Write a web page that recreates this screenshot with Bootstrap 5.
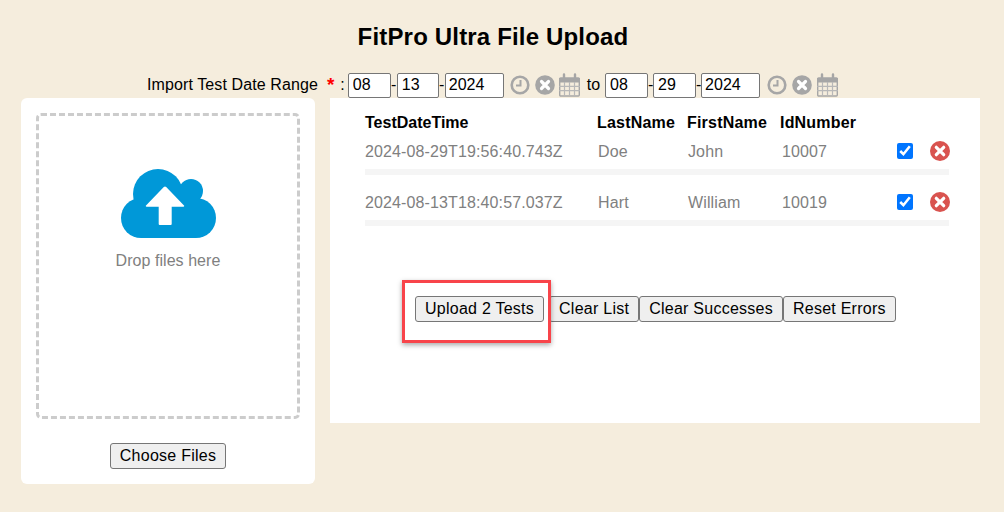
<!DOCTYPE html>
<html lang="en">
<head>
    <meta charset="UTF-8">
    <meta name="viewport" content="width=device-width, initial-scale=1.0">
    <title>FitPro Ultra File Upload</title>
    <link href="https://cdn.jsdelivr.net/npm/bootstrap@5.3.3/dist/css/bootstrap.min.css" rel="stylesheet">
    <style>
        html, body { height: 512px; overflow: hidden; }
        body { background: #f5eddd; font-family: "Liberation Sans", Arial, sans-serif; font-size: 16px; color: #000; }
        .page-title { font-size: 24px; font-weight: 700; line-height: 28px; letter-spacing: .17px; margin: 0 0 0 -18px; padding-top: 23px; text-align: center; }
        .range-row { height: 26px; margin-top: 21px; padding-left: 147px; line-height: 26px; white-space: nowrap; }
        .range-label { letter-spacing: .1px; }
        .req { color: #f00; font-weight: 700; font-size: 19px; margin: 0 6px 0 9px; line-height: 26px; }
        .dash { width: 6px; text-align: center; }
        .dash-sm { width: 5px; }
        .date-part { height: 25px; padding: 0 0 0 4px; border: 1px solid #767676; border-radius: 2px; background: #fff; font: 16px "Liberation Sans", Arial, sans-serif; color: #000; outline: none; }
        .w-mm { width: 43px; }
        .w-dd { width: 42px; }
        .w-dd2 { width: 43px; }
        .w-yy { width: 59px; padding-left: 3px; }
        .date-tool { display: block; flex: none; margin-left: 5px; }
        .tool-first { margin-left: 6px; }
        .tool-first2 { margin-left: 7px; }
        .tool-cal { margin-left: 3px; }
        .tool-cal2 { margin-left: 4px; }
        .to-word { margin: 0 5px 0 6px; }
        .panels { padding-left: 21px; align-items: flex-start; }
        .drop-panel { width: 294px; height: 386px; background: #fff; border-radius: 6px; padding: 15px 15px 0; }
        .drop-zone { height: 306px; border: 3px dashed #ccc; border-radius: 5px; padding-top: 53px; color: #808080; }
        .drop-zone span { line-height: 20px; margin-top: 12px; letter-spacing: .05px; }
        .choose-wrap { margin-top: 24px; }
        .plain-btn { height: 26px; padding: 0 9px; border: 1px solid #767676; border-radius: 3px; background: #efefef; color: #000; font: 16px "Liberation Sans", Arial, sans-serif; letter-spacing: .25px; line-height: 22px; white-space: nowrap; }
        .list-panel { width: 650px; height: 325px; margin-left: 15px; background: #fff; padding: 15px 31px 0 35px; position: relative; }
        .test-grid { display: grid; align-items: center; }
        .test-head { grid-template-columns: 232px 90px 93px 115px; font-weight: 700; height: 20px; line-height: 20px; letter-spacing: .2px; }
        .test-head span { white-space: nowrap; }
        .test-head span:first-child { letter-spacing: 0; }
        .test-row { grid-template-columns: 233px 90px 94px 115px 33px 21px; height: 36px; color: #808080; line-height: 20px; letter-spacing: .12px; }
        .test-row span { padding-top: 2px; }
        .row-next { margin-top: 9px; }
        .strip { height: 6px; background: #f5f5f5; }
        .pick { width: 16px; height: 16px; margin: 0; display: block; accent-color: #0075ff; }
        .action-row { margin-top: 70px; padding-left: 50px; }
        .action-row .plain-btn:first-child { margin-right: 5px; }
        .call-out { position: absolute; left: 72px; top: 182px; width: 149px; height: 63px; border: 3px solid #f8444a; box-shadow: 0 2px 5px rgba(0, 0, 0, .35); pointer-events: none; }
    </style>
</head>
<body>
    <h1 class="page-title">FitPro Ultra File Upload</h1>

    <!-- date range -->
    <div class="range-row d-flex align-items-center">
        <span class="range-label">Import Test Date Range</span><span class="req">*</span><span>:</span>
        <input class="date-part w-mm" style="margin-left:3px" value="08"><span class="dash">-</span><input class="date-part w-dd" value="13"><span class="dash">-</span><input class="date-part w-yy" value="2024">
        <svg class="date-tool tool-first" width="20" height="20" viewBox="0 0 20 20"><circle cx="10" cy="10" r="8.300" fill="none" stroke="#a6a6a6" stroke-width="2.600"/><path d="M10.500 5v5.500H6" fill="none" stroke="#a6a6a6" stroke-width="2"/></svg>
        <svg class="date-tool" width="20" height="20" viewBox="0 0 20 20"><circle cx="10" cy="10" r="9.800" fill="#a6a6a6"/><path d="M6.500 6.500l7 7M13.500 6.500l-7 7" stroke="#fff" stroke-width="3.200" stroke-linecap="round"/></svg>
        <svg class="date-tool tool-cal" width="23" height="24" viewBox="0 0 23 24"><rect x="1.700" y="5" width="19.600" height="18" rx="1" fill="#f5eddd" stroke="#a6a6a6" stroke-width="1.400"/><rect x="1" y="5" width="21" height="4.500" fill="#a6a6a6"/><path d="M6.500 9v13M11.500 9v13M16.500 9v13M1 13.300h21M1 17.700h21" stroke="#b8b8b8" stroke-width="1.200"/><path d="M6 1.500v5M17 1.500v5" stroke="#a6a6a6" stroke-width="2.400" stroke-linecap="round"/></svg>
        <span class="to-word">to</span>
        <input class="date-part w-mm" value="08"><span class="dash dash-sm">-</span><input class="date-part w-dd2" value="29"><span class="dash dash-sm">-</span><input class="date-part w-yy" value="2024">
        <svg class="date-tool tool-first2" width="20" height="20" viewBox="0 0 20 20"><circle cx="10" cy="10" r="8.300" fill="none" stroke="#a6a6a6" stroke-width="2.600"/><path d="M10.500 5v5.500H6" fill="none" stroke="#a6a6a6" stroke-width="2"/></svg>
        <svg class="date-tool" width="20" height="20" viewBox="0 0 20 20"><circle cx="10" cy="10" r="9.800" fill="#a6a6a6"/><path d="M6.500 6.500l7 7M13.500 6.500l-7 7" stroke="#fff" stroke-width="3.200" stroke-linecap="round"/></svg>
        <svg class="date-tool tool-cal2" width="23" height="24" viewBox="0 0 23 24"><rect x="1.700" y="5" width="19.600" height="18" rx="1" fill="#f5eddd" stroke="#a6a6a6" stroke-width="1.400"/><rect x="1" y="5" width="21" height="4.500" fill="#a6a6a6"/><path d="M6.500 9v13M11.500 9v13M16.500 9v13M1 13.300h21M1 17.700h21" stroke="#b8b8b8" stroke-width="1.200"/><path d="M6 1.500v5M17 1.500v5" stroke="#a6a6a6" stroke-width="2.400" stroke-linecap="round"/></svg>
    </div>

    <div class="panels d-flex">
        <!-- drop area -->
        <div class="drop-panel">
            <div class="drop-zone d-flex flex-column align-items-center">
                <svg width="95" height="70" viewBox="0 0 95 70">
                    <g fill="#0098d8"><circle cx="37" cy="25" r="25"/><circle cx="70" cy="22" r="12"/><circle cx="20" cy="49" r="20"/><circle cx="75" cy="49" r="20"/><rect x="20" y="28" width="55" height="41"/></g>
                    <path d="M42.800 18a1.700 1.700 0 0 1 2.400 0L63 36.500a.7.700 0 0 1-.5 1.200H50.700V55a1 1 0 0 1-1 1H38.700a1 1 0 0 1-1-1V37.700H25.500a.7.700 0 0 1-.5-1.200z" fill="#fff"/>
                </svg>
                <span>Drop files here</span>
            </div>
            <div class="choose-wrap text-center">
                <button class="plain-btn">Choose Files</button>
            </div>
        </div>

        <!-- selected tests -->
        <div class="list-panel">
            <div class="test-grid test-head">
                <span>TestDateTime</span><span>LastName</span><span>FirstName</span><span>IdNumber</span>
            </div>
            <div class="test-grid test-row">
                <span>2024-08-29T19:56:40.743Z</span><span>Doe</span><span>John</span><span>10007</span>
                <input type="checkbox" class="pick" checked>
                <svg width="20" height="20" viewBox="0 0 20 20"><circle cx="10" cy="10" r="10" fill="#d9534f"/><path d="M6.300 6.300l7.400 7.400M13.700 6.300l-7.400 7.400" stroke="#fff" stroke-width="3.200" stroke-linecap="round"/></svg>
            </div>
            <div class="strip"></div>
            <div class="test-grid test-row row-next">
                <span>2024-08-13T18:40:57.037Z</span><span>Hart</span><span>William</span><span>10019</span>
                <input type="checkbox" class="pick" checked>
                <svg width="20" height="20" viewBox="0 0 20 20"><circle cx="10" cy="10" r="10" fill="#d9534f"/><path d="M6.300 6.300l7.400 7.400M13.700 6.300l-7.400 7.400" stroke="#fff" stroke-width="3.200" stroke-linecap="round"/></svg>
            </div>
            <div class="strip"></div>
            <div class="action-row d-flex">
                <button class="plain-btn">Upload 2 Tests</button><button class="plain-btn">Clear List</button><button class="plain-btn">Clear Successes</button><button class="plain-btn">Reset Errors</button>
            </div>
            <div class="call-out"></div>
        </div>
    </div>

    <script src="https://cdn.jsdelivr.net/npm/bootstrap@5.3.3/dist/js/bootstrap.bundle.min.js"></script>
</body>
</html>
